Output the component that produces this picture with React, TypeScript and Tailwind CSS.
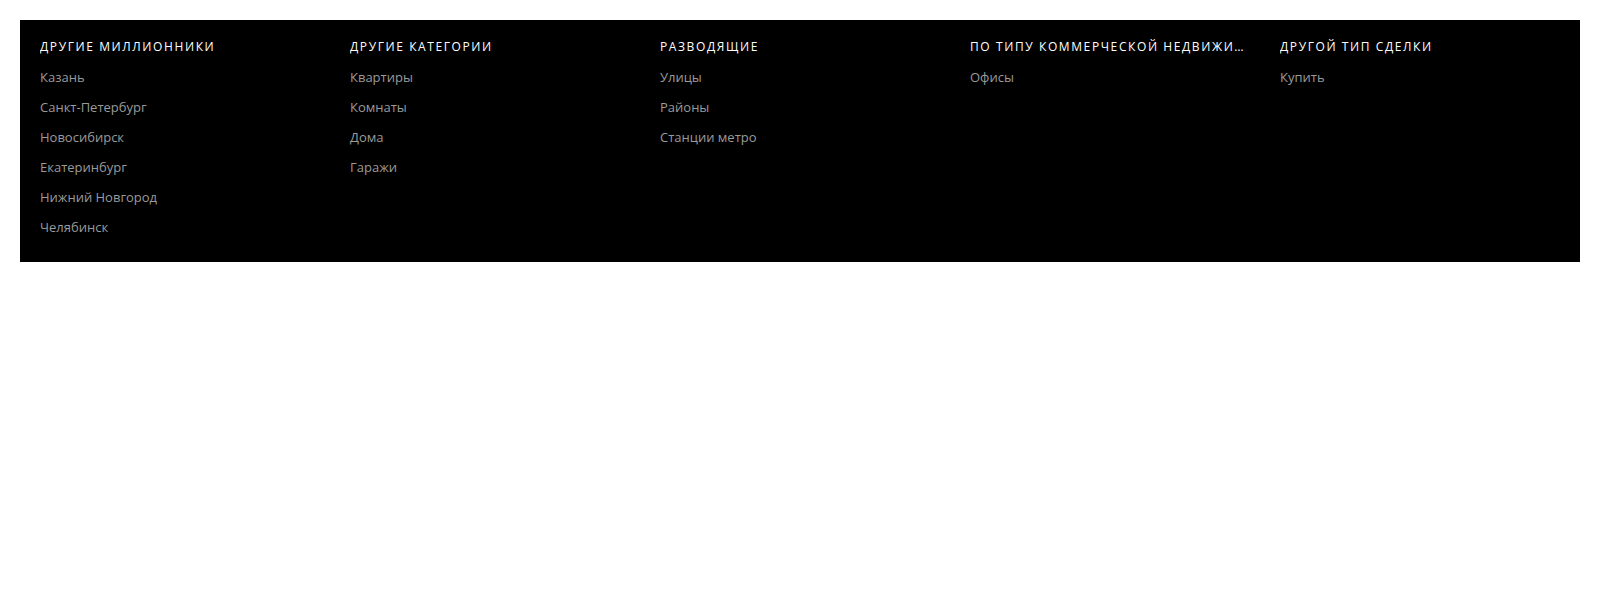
import React from 'react';

interface LinkGroup {
  title: string;
  links: string[];
}

const GROUPS: LinkGroup[] = [
  {
    title: 'Другие миллионники',
    links: ['Казань', 'Санкт-Петербург', 'Новосибирск', 'Екатеринбург', 'Нижний Новгород', 'Челябинск'],
  },
  {
    title: 'Другие категории',
    links: ['Квартиры', 'Комнаты', 'Дома', 'Гаражи'],
  },
  {
    title: 'Разводящие',
    links: ['Улицы', 'Районы', 'Станции метро'],
  },
  {
    title: 'По типу коммерческой недвижимости',
    links: ['Офисы'],
  },
  {
    title: 'Другой тип сделки',
    links: ['Купить'],
  },
];

export default function App() {
  return (
    <div className="min-h-[600px] bg-white p-5 font-['Open_Sans',sans-serif]">
      <footer className="bg-black px-5 pt-[19px] pb-[20px]">
        <div className="grid grid-cols-5 gap-x-[30px]">
          {GROUPS.map(group => (
            <div key={group.title} className="min-w-0">
              <h3 className="truncate pr-[6px] text-[12px] leading-4 uppercase tracking-[1.6px] text-white">
                {group.title}
              </h3>
              <ul className="mt-[7px] flex flex-col">
                {group.links.map(link => (
                  <li key={link}>
                    <a href="#" className="block text-[13px] leading-[30px] text-[#9a9a9a] hover:text-white">
                      {link}
                    </a>
                  </li>
                ))}
              </ul>
            </div>
          ))}
        </div>
      </footer>
    </div>
  );
}
